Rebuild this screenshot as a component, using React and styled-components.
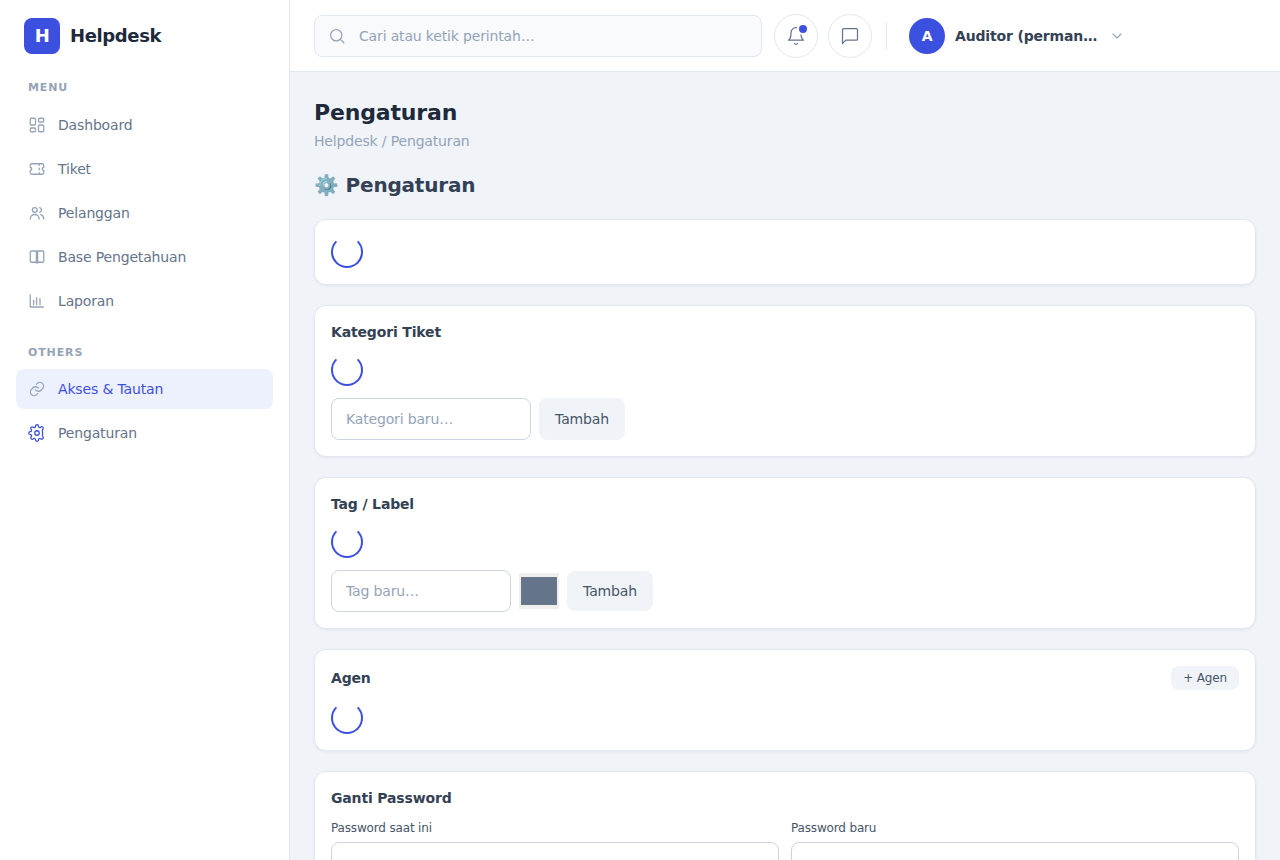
import React from 'react';
import styled, { createGlobalStyle } from 'styled-components';

const GlobalStyle = createGlobalStyle`
  *, *::before, *::after { box-sizing: border-box; }
  html, body { margin: 0; height: 100%; overflow: hidden; }
  body {
    background: #f0f4f9;
    color: #334155;
    font-family: "DejaVu Sans", sans-serif;
    font-size: 14px;
    line-height: 20px;
    letter-spacing: -0.16px;
  }
  input, button { font: inherit; letter-spacing: inherit; }
  h1, h2, h3, p { margin: 0; }
`;

const Shell = styled.div`
  display: flex;
  height: 100vh;
  overflow: hidden;
`;

const Sidebar = styled.aside`
  width: 290px;
  flex: none;
  background: #fff;
  border-right: 1px solid #e2e8f0;
`;

const Brand = styled.div`
  display: flex;
  align-items: center;
  gap: 10px;
  height: 72px;
  padding: 0 24px;
  color: #1e293b;
  font-size: 18px;
  font-weight: 700;
  letter-spacing: -0.38px;
`;

const BrandMark = styled.span`
  display: grid;
  place-items: center;
  width: 36px;
  height: 36px;
  border-radius: 8px;
  background: #3c50e0;
  color: #fff;
`;

const NavGroup = styled.nav`
  display: flex;
  flex-direction: column;
  gap: 4px;
  padding: 0 16px;

  & + & { margin-top: 16px; }
`;

const NavTitle = styled.div`
  height: ${(p) => p.$height}px;
  padding: 7px 12px 0;
  color: #94a3b8;
  font-size: 11px;
  line-height: 18px;
  font-weight: 700;
  letter-spacing: 0.88px;
`;

const NavItem = styled.a`
  display: flex;
  align-items: center;
  gap: 12px;
  height: 40px;
  padding: 0 12px;
  border-radius: 8px;
  background: ${(p) => (p.$active ? '#edf1fe' : 'transparent')};
  color: ${(p) => (p.$active ? '#3c50e0' : '#64748b')};

  svg { color: ${(p) => (p.$accent ? '#3c50e0' : '#94a3b8')}; overflow: visible; }
`;

const Main = styled.div`
  flex: 1;
  min-width: 0;
`;

const Topbar = styled.header`
  display: flex;
  align-items: center;
  height: 72px;
  padding: 0 24px;
  background: #fff;
  border-bottom: 1px solid #e2e8f0;
`;

const Search = styled.label`
  display: flex;
  align-items: center;
  gap: 13px;
  width: 448px;
  height: 42px;
  padding: 0 13px;
  border: 1px solid #e2e8f0;
  border-radius: 8px;
  background: #f8fafc;
  color: #94a3b8;
`;

const SearchInput = styled.input`
  flex: 1;
  border: 0;
  padding: 0;
  outline: 0;
  background: transparent;
  &::placeholder { color: #94a3b8; opacity: 1; }
`;

const Actions = styled.div`
  display: flex;
  gap: 10px;
  margin-left: 12px;
`;

const RoundButton = styled.button`
  position: relative;
  display: grid;
  place-items: center;
  width: 44px;
  height: 44px;
  padding: 0;
  border: 1px solid #e2e8f0;
  border-radius: 50%;
  background: #fff;
  color: #64748b;
`;

const Dot = styled.span`
  position: absolute;
  top: 8px;
  right: 8px;
  width: 12px;
  height: 12px;
  border: 2px solid #fff;
  border-radius: 50%;
  background: #3c50e0;
`;

const Divider = styled.span`
  width: 1px;
  height: 28px;
  margin: 0 22px 0 14px;
  background: #e2e8f0;
`;

const Profile = styled.div`
  display: flex;
  align-items: center;
  gap: 10px;
  color: #334155;
  font-weight: 600;

  svg { margin-left: 2px; color: #94a3b8; }
`;

const Avatar = styled.span`
  display: grid;
  place-items: center;
  width: 36px;
  height: 36px;
  border-radius: 50%;
  background: #3c50e0;
  color: #fff;
  font-weight: 700;
`;

const ProfileName = styled.span`
  width: 142px;
  white-space: nowrap;
`;

const Content = styled.main`
  padding: 24px;
`;

const PageTitle = styled.h1`
  color: #1e293b;
  font-size: 22px;
  line-height: 33px;
  font-weight: 700;
`;

const Crumbs = styled.p`
  margin-top: 2px;
  color: #94a3b8;
  line-height: 21px;
`;

const SectionTitle = styled.h2`
  margin: 18px 0 19px;
  color: #334155;
  font-size: 20px;
  line-height: 30px;
  font-weight: 700;
  letter-spacing: -0.2px;
`;

const Card = styled.section`
  margin-bottom: 20px;
  padding: 16px;
  border: 1px solid #e2e8f0;
  border-radius: 12px;
  background: #fff;
  box-shadow: 0 1px 3px rgba(15, 23, 42, 0.06);
`;

const CardHead = styled.div`
  display: flex;
  align-items: center;
  justify-content: space-between;
  height: ${(p) => p.$height || 20}px;
  margin-bottom: ${(p) => p.$gap || 12}px;
`;

const CardTitle = styled.h3`
  color: #334155;
  font-size: 14px;
  line-height: 21px;
  font-weight: 600;
`;

const Spinner = styled.div`
  width: 32px;
  height: 32px;
  border: 2px solid #3c50e0;
  border-top-color: transparent;
  border-radius: 50%;
`;

const FormRow = styled.div`
  display: flex;
  align-items: center;
  gap: 8px;
  margin-top: 12px;
`;

const TextInput = styled.input`
  display: block;
  width: ${(p) => p.$width || '100%'};
  height: 42px;
  padding: 0 14px;
  border: 1px solid #cbd5e1;
  border-radius: 8px;
  background: #fff;
  outline: 0;
  &::placeholder { color: #94a3b8; opacity: 1; }
`;

const Button = styled.button`
  width: ${(p) => (p.$small ? 68 : 86)}px;
  height: ${(p) => p.$height || 40}px;
  padding: 0;
  border: 0;
  border-radius: 8px;
  background: #f0f4f9;
  color: #475569;
  font-size: ${(p) => (p.$small ? 12 : 14)}px;
`;

const ColorWell = styled.span`
  display: flex;
  width: 40px;
  height: 36px;
  padding: 4px 2px;
  background: #efefef;

  &::before {
    content: '';
    flex: 1;
    border: 1px solid #6b7787;
    background: #64748b;
  }
`;

const FieldGrid = styled.div`
  display: grid;
  grid-template-columns: 1fr 1fr;
  gap: 12px;
`;

const Field = styled.label`
  color: #475569;
  font-size: 12px;
  line-height: 18px;

  input { margin-top: 5px; }
`;

const Icon = ({ size = 18, stroke = 1.7, children }) => (
  <svg width={size} height={size} viewBox="0 0 24 24" fill="none" stroke="currentColor"
    strokeWidth={stroke} strokeLinecap="round" strokeLinejoin="round">{children}</svg>
);

const icons = {
  dashboard: <><rect x="3" y="3" width="7" height="9" rx="1.5" /><rect x="14" y="3" width="7" height="5" rx="1.5" /><rect x="14" y="12" width="7" height="9" rx="1.5" /><rect x="3" y="16" width="7" height="5" rx="1.5" /></>,
  ticket: <path d="M15 5v2M15 11v2M15 17v2M5 5h14a2 2 0 0 1 2 2v3a2 2 0 0 0 0 4v3a2 2 0 0 1-2 2H5a2 2 0 0 1-2-2v-3a2 2 0 0 0 0-4V7a2 2 0 0 1 2-2z" />,
  users: <><circle cx="9" cy="8" r="3.2" /><path d="M3 20c0-3.5 2.7-6 6-6s6 2.5 6 6M15.5 4.9a3.2 3.2 0 0 1 0 6.2M17 14.2c2.5.8 4 2.9 4 5.8" /></>,
  book: <path d="M11.2 4H4.5A1.5 1.5 0 0 0 3 5.5v12A1.5 1.5 0 0 0 4.5 19h5.2a1.5 1.5 0 0 1 1.5 1zM12.8 4h6.7A1.5 1.5 0 0 1 21 5.5v12a1.5 1.5 0 0 1-1.5 1.5h-5.2a1.5 1.5 0 0 0-1.5 1z" />,
  chart: <path d="M3 4v16h17.500M7.500 17v-6M11.500 17V7.500M16 17V9" />,
  link: <path d="M10 13.2a5 5 0 0 0 7.300.400l2.100-2.100a4.950 4.950 0 0 0-7-7l-1.200 1.200M14 10.800a5 5 0 0 0-7.300-.400l-2.100 2.100a4.950 4.950 0 0 0 7 7l1.200-1.200" />,
  gear: <><circle cx="12" cy="12" r="3" /><path d="M19.4 15a1.65 1.65 0 0 0 .33 1.82l.06.06a2 2 0 0 1 0 2.83 2 2 0 0 1-2.83 0l-.06-.06a1.65 1.65 0 0 0-1.82-.33 1.65 1.65 0 0 0-1 1.51V21a2 2 0 0 1-4 0v-.09A1.65 1.65 0 0 0 9 19.4a1.65 1.65 0 0 0-1.82.33l-.06.06a2 2 0 0 1-2.83 0 2 2 0 0 1 0-2.83l.06-.06a1.65 1.65 0 0 0 .33-1.82 1.65 1.65 0 0 0-1.51-1H3a2 2 0 0 1 0-4h.09A1.65 1.65 0 0 0 4.6 9a1.65 1.65 0 0 0-.33-1.82l-.06-.06a2 2 0 0 1 0-2.83 2 2 0 0 1 2.83 0l.06.06a1.65 1.65 0 0 0 1.82.33H9a1.65 1.65 0 0 0 1-1.51V3a2 2 0 0 1 4 0v.09a1.65 1.65 0 0 0 1 1.51 1.65 1.65 0 0 0 1.82-.33l.06-.06a2 2 0 0 1 2.83 0 2 2 0 0 1 0 2.83l-.06.06a1.65 1.65 0 0 0-.33 1.82z" /></>,
  search: <><circle cx="11" cy="11" r="7.5" /><path d="m21 21-4.5-4.5" /></>,
  bell: <path d="M18 8A6 6 0 0 0 6 8c0 7-3 9-3 9h18s-3-2-3-9M13.73 21a2 2 0 0 1-3.46 0" />,
  chat: <path d="M21 15.5a1.500 1.500 0 0 1-1.500 1.500H7l-4 4V4.500A1.500 1.500 0 0 1 4.500 3h15A1.500 1.500 0 0 1 21 4.500z" />,
  chevron: <path d="m6 9 6 6 6-6" />,
};

const menu = [
  ['dashboard', 'Dashboard'],
  ['ticket', 'Tiket'],
  ['users', 'Pelanggan'],
  ['book', 'Base Pengetahuan'],
  ['chart', 'Laporan'],
];

export default function App() {
  return (
    <>
      <GlobalStyle />
      <Shell>
        <Sidebar>
          <Brand><BrandMark>H</BrandMark>Helpdesk</Brand>
          <NavGroup>
            <NavTitle $height={29}>MENU</NavTitle>
            {menu.map(([icon, label]) => (
              <NavItem key={label}><Icon>{icons[icon]}</Icon>{label}</NavItem>
            ))}
          </NavGroup>
          <NavGroup>
            <NavTitle $height={28}>OTHERS</NavTitle>
            <NavItem $active><Icon>{icons.link}</Icon>Akses &amp; Tautan</NavItem>
            <NavItem $accent><Icon>{icons.gear}</Icon>Pengaturan</NavItem>
          </NavGroup>
        </Sidebar>
        <Main>
          <Topbar>
            <Search>
              <Icon>{icons.search}</Icon>
              <SearchInput placeholder="Cari atau ketik perintah…" />
            </Search>
            <Actions>
              <RoundButton><Icon size={20} stroke={1.5}>{icons.bell}</Icon><Dot /></RoundButton>
              <RoundButton><Icon size={20} stroke={1.5}>{icons.chat}</Icon></RoundButton>
            </Actions>
            <Divider />
            <Profile>
              <Avatar>A</Avatar>
              <ProfileName>Auditor (perman…</ProfileName>
              <Icon size={16}>{icons.chevron}</Icon>
            </Profile>
          </Topbar>
          <Content>
            <PageTitle>Pengaturan</PageTitle>
            <Crumbs>Helpdesk / Pengaturan</Crumbs>
            <SectionTitle>⚙️ Pengaturan</SectionTitle>
            <Card><Spinner /></Card>
            <Card>
              <CardHead><CardTitle>Kategori Tiket</CardTitle></CardHead>
              <Spinner />
              <FormRow>
                <TextInput $width="200px" placeholder="Kategori baru…" />
                <Button $height={42}>Tambah</Button>
              </FormRow>
            </Card>
            <Card>
              <CardHead><CardTitle>Tag / Label</CardTitle></CardHead>
              <Spinner />
              <FormRow>
                <TextInput $width="180px" placeholder="Tag baru…" />
                <ColorWell />
                <Button>Tambah</Button>
              </FormRow>
            </Card>
            <Card>
              <CardHead $height={24}>
                <CardTitle>Agen</CardTitle>
                <Button $small $height={24}>+ Agen</Button>
              </CardHead>
              <Spinner />
            </Card>
            <Card>
              <CardHead $gap={11}><CardTitle>Ganti Password</CardTitle></CardHead>
              <FieldGrid>
                <Field>Password saat ini<TextInput type="password" /></Field>
                <Field>Password baru<TextInput type="password" /></Field>
              </FieldGrid>
            </Card>
          </Content>
        </Main>
      </Shell>
    </>
  );
}
